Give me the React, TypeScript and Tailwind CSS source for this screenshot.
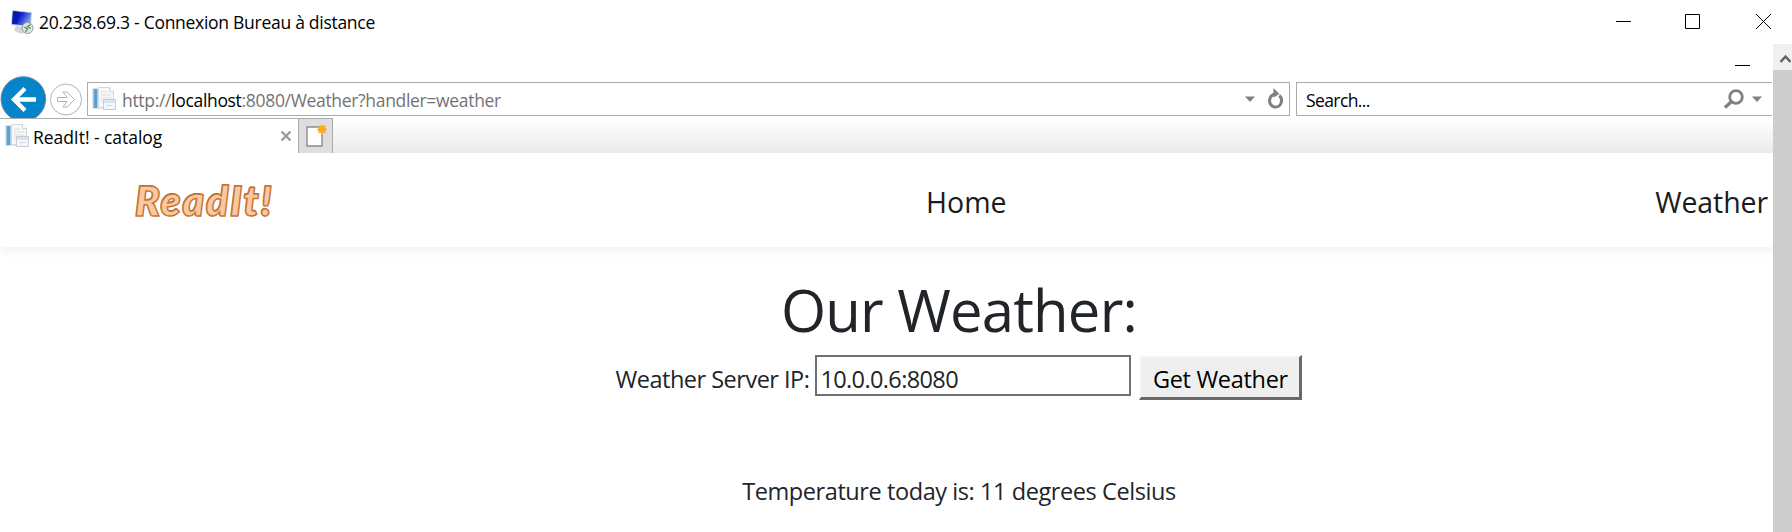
function RemoteDesktopIcon() {
  return (
    <svg width="24" height="26" viewBox="0 0 24 26">
      <defs>
        <linearGradient id="screen" x1="0" y1="0" x2="1" y2="0.5">
          <stop offset="0" stopColor="#0a1bb5" />
          <stop offset="0.5" stopColor="#1024cc" />
          <stop offset="1" stopColor="#7f9bf0" />
        </linearGradient>
      </defs>
      <path d="M6 17l10 2v5l-6 .5-6-3z" fill="#d3d6d8" />
      <path d="M2 1l20 2-1 16L1 16z" fill="#c9d2e4" />
      <path d="M3 2l18 2-1 13L2 15z" fill="url(#screen)" />
      <path d="M3 2l7 1-3 12-5-1z" fill="#0713a0" opacity="0.6" />
      <circle cx="17.500" cy="19" r="5.500" fill="#dfe2e0" stroke="#9a9e9c" />
      <path d="M14.500 18l3 2-2 3M20.500 15.500l-3 2 3 2" fill="none" stroke="#3f9a4c" strokeWidth="1.300" />
    </svg>
  );
}

function PageIcon() {
  return (
    <svg width="24" height="24" viewBox="0 0 24 24" className="shrink-0">
      <path d="M0.5 1.5h15v20h-15z" fill="#f3f6f8" stroke="#dfe3e6" />
      <path d="M1.500 2h4v19h-4z" fill="#5ba0d0" />
      <path d="M6.500 .5h11l4 4v16h-15z" fill="#f6f7f8" stroke="#d5d9dc" />
      <path d="M17.500 .5v4h4" fill="#fff" stroke="#cfd3d6" />
      <path d="M9 5h6M9 8h10M9 11h10M9 14h3" stroke="#d9dee2" />
      <path d="M11.500 12.500h12v10h-12z" fill="#f4f6f9" stroke="#c5ccd5" />
      <path d="M12 13h11v3H12z" fill="#dbe3ee" />
      <path d="M14.500 18.500h6" stroke="#d0d4da" />
    </svg>
  );
}

function Caret() {
  return (
    <svg width="10" height="6" viewBox="0 0 10 6">
      <path d="M0 0.500h10L5 6z" fill="#808080" />
    </svg>
  );
}

function TitleBar() {
  return (
    <header className="flex h-11 items-center justify-between bg-white">
      <div className="flex items-center pl-[10px]">
        <RemoteDesktopIcon />
        <span className="ml-[5px] text-[17.5px] leading-6 tracking-[-0.28px] text-black">
          20.238.69.3 - Connexion Bureau à distance
        </span>
      </div>
      <div className="flex pr-[21px] pb-px">
        <svg width="155" height="15" viewBox="0 0 155 15" fill="none" stroke="#000">
          <path d="M0 7.500h15M69.500 .5h14v14h-14zM140 0l15 15M155 0l-15 15" />
        </svg>
      </div>
    </header>
  );
}

function AddressRow() {
  return (
    <div className="flex h-[42px] overflow-hidden">
      <svg width="87" height="42" viewBox="0 0 87 42" className="shrink-0">
        <circle cx="23.300" cy="23" r="22.300" fill="#0584ca" stroke="#6f8798" />
        <path d="M36 23.500H15M25 12.500l-11 11 11 11" fill="none" stroke="#fff" strokeWidth="4.300" />
        <circle cx="66" cy="23.500" r="15.500" fill="#fff" stroke="#b3b3b3" />
        <path d="M57.500 21.500h9.500l-4-5.500h4l7.500 7.500-7.500 7.500h-4l4-5.500h-9.500z" fill="#fff" stroke="#b3b3b3" />
      </svg>
      <div className="mt-[6px] flex h-[34px] w-[1203px] items-center border border-[#ababab] bg-white">
        <span className="ml-[4px]"><PageIcon /></span>
        <span className="ml-[6px] pt-[2px] text-[17.5px] leading-6 tracking-[-0.32px] text-[#737373]">
          http://<span className="text-black">localhost</span>:8080/Weather?handler=weather
        </span>
        <span className="ml-auto flex items-center">
          <Caret />
          <svg width="18" height="22" viewBox="0 0 18 22" className="mr-[6px] mb-[2px] ml-[10px]">
            <path d="M13.800 7.500A6 6.500 0 1 1 8 6.500H10" fill="none" stroke="#808080" strokeWidth="3" transform="translate(0.500 1)" />
            <path d="M8.500 1l6 6-6 3.500z" fill="#808080" />
          </svg>
        </span>
      </div>
      <div className="mt-[6px] ml-[6px] flex h-[34px] w-[476px] items-center border border-r-0 border-[#ababab] bg-white">
        <span className="ml-[9px] pt-[2px] text-[17.5px] leading-6 tracking-[-0.6px] text-black">Search...</span>
        <span className="ml-auto flex items-center pr-[10px]">
          <svg width="20" height="20" viewBox="0 0 20 20" className="mr-[8px]" fill="none" stroke="#808080" strokeWidth="2.800">
            <circle cx="12" cy="8" r="6.300" />
            <path d="M7.500 12.500l-6.500 6" strokeWidth="3.300" />
          </svg>
          <Caret />
        </span>
      </div>
    </div>
  );
}

function TabRow() {
  return (
    <div className="flex h-[35px] bg-linear-to-b from-white to-[#ebebeb]">
      <div className="flex w-[298px] items-center border-t border-[#ababab] bg-white pl-[5px]">
        <PageIcon />
        <span className="ml-[4px] pt-[2px] text-[17.5px] leading-6 tracking-[-0.05px] text-black">ReadIt! - catalog</span>
        <svg width="10" height="10" viewBox="0 0 10 10" className="mr-[7px] mb-[1px] ml-auto" stroke="#a0a0a0" strokeWidth="2.500">
          <path d="M0.500 0.500l9 9M9.500 0.500l-9 9" />
        </svg>
      </div>
      <div className="flex w-[35px] items-center border border-b-0 border-[#ababab] bg-[#dedede] pl-[7px]">
        <svg width="22" height="24" viewBox="0 0 22 24">
          <path d="M1 3h15v19H1z" fill="#fff" stroke="#8c8c8c" strokeWidth="1.400" />
          <path d="M16 0l1.300 2.300 2.500-.8-.7 2.400L21.500 5.500l-2.300 1.300.7 2.500-2.600-.7L16 11l-1.300-2.400-2.600.7.7-2.500-2.300-1.300 2.400-1.600-.7-2.400 2.500.8z" fill="#fbab1a" />
        </svg>
      </div>
    </div>
  );
}

function SiteNav() {
  return (
    <nav className="flex h-[94px] items-center bg-white text-[28.5px] leading-10 text-[#1b1b1b] shadow-[0_4px_10px_rgba(0,0,0,0.06)]">
      <span className="w-[926px] pt-[5px] pl-[135px]">
        <span className="font-[Lato] text-[41px] font-extrabold italic tracking-[1.7px] text-[#fbc9a0] [-webkit-text-stroke:1.500px_#c87638] [text-shadow:-0.5px_-1px_0_#8a5a35]">
          ReadIt!
        </span>
      </span>
      <span className="pt-[4px]">Home</span>
      <span className="flex-1 pt-[4px] pr-[5px] text-right tracking-[-0.1px]">Weather</span>
    </nav>
  );
}

function WeatherForm() {
  return (
    <main className="flex flex-col items-center pt-[23px] pl-[145px] text-[23.5px] text-[#212529]">
      <h1 className="h-[85px] text-[58px] leading-[80px] tracking-[-0.8px]">Our Weather:</h1>
      <form className="flex h-[46px] items-start" onSubmit={(e) => e.preventDefault()}>
        <label htmlFor="ip" className="mr-[6px] pt-[8px] leading-8 tracking-[-0.5px]">Weather Server IP:</label>
        <input
          id="ip"
          defaultValue="10.0.0.6:8080"
          className="h-[41px] w-[316px] border-2 border-[#707070] bg-white pt-[7px] pl-[3px] leading-8 tracking-[-0.62px]"
        />
        <button className="ml-[8px] h-[45px] w-[163px] border-t-2 border-r-3 border-b-3 border-l-2 border-t-[#fbfbfb] border-r-[#696969] border-b-[#696969] border-l-[#fbfbfb] bg-[#efefef] pt-[4px] leading-8 tracking-[-0.3px] text-black">
          Get Weather
        </button>
      </form>
      <p className="mt-[74px] leading-8 tracking-[-0.42px]">Temperature today is: 11 degrees Celsius</p>
    </main>
  );
}

export default function App() {
  return (
    <div className="h-[532px] w-[1792px] overflow-hidden bg-white font-['Open_Sans',sans-serif]">
      <TitleBar />
      <div className="flex h-[488px]">
        <div className="w-[1773px] overflow-hidden">
          <div className="flex h-[32px] items-start justify-end pt-[21px] pr-[23px]">
            <div className="h-px w-[15px] bg-black" />
          </div>
          <AddressRow />
          <TabRow />
          <SiteNav />
          <WeatherForm />
        </div>
        <div className="w-[19px] bg-[#cdcdcd]">
          <div className="flex h-[26px] items-center bg-[#f0f0f0] pt-[3px] pl-[7px]">
            <svg width="11" height="10" viewBox="0 0 11 10" fill="none" stroke="#606060" strokeWidth="2.500">
              <path d="M0.500 8l5-5.500 5 5.500" />
            </svg>
          </div>
        </div>
      </div>
    </div>
  );
}
